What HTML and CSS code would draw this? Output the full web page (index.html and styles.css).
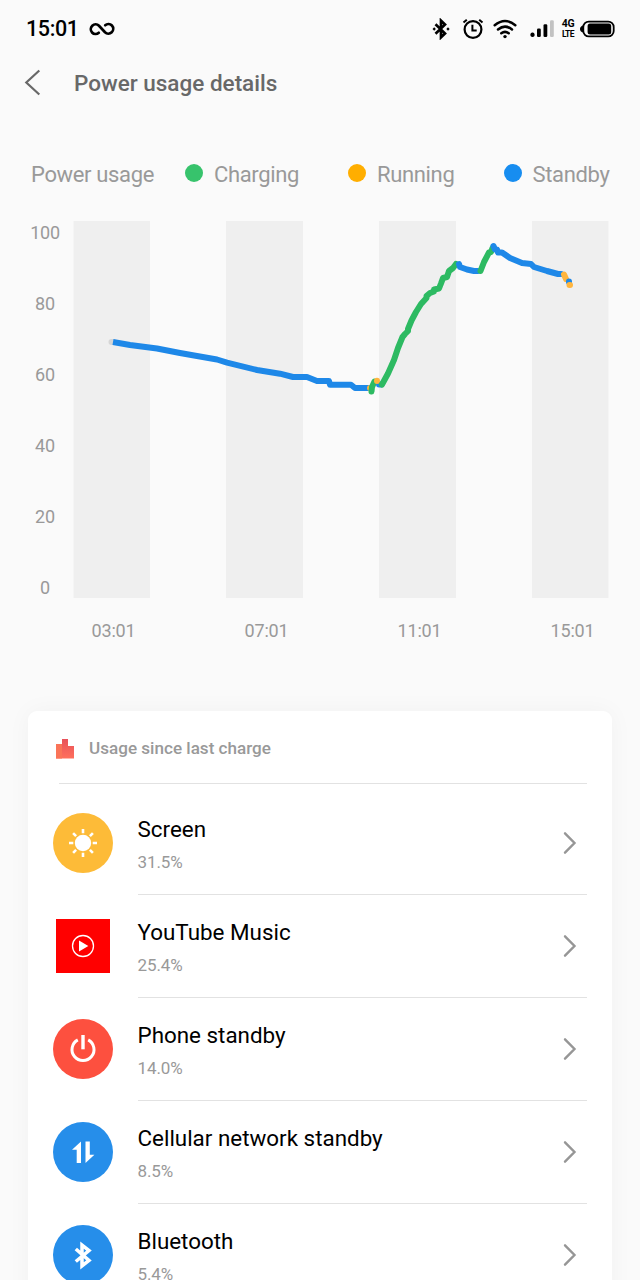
FILE: index.html
```html
<!DOCTYPE html>
<html lang="en">
<head>
  <meta charset="UTF-8" />
  <meta name="viewport" content="width=device-width, initial-scale=1.0"/>
  <title>Power usage details</title>
  <link rel="stylesheet" href="styles.css">
</head>
<body>
  <div class="status-bar">
    <span class="clock">15:01</span>
    <svg class="infinity" width="26" height="14" viewBox="0 0 26 14">
      <path d="M9.800 10.800A4.800 4.800 0 1 1 10 3.800L16 10.200A4.800 4.800 0 1 0 16.200 3.200" fill="none" stroke="#000" stroke-width="2.700" stroke-linecap="round"/>
    </svg>

    <div class="status-icons">
      <svg width="18" height="22" viewBox="0 0 18 22">
        <path d="M3.500 6.200L13 15.400L9 19.300V2.700L13 6.600L3.500 15.800" fill="none" stroke="#000" stroke-width="2.700"/>
        <path d="M0.500 11l1.700-1.700L3.900 11l-1.700 1.700zM14.300 11l1.700-1.700L17.700 11l-1.700 1.700z"/>
      </svg>
      <svg class="alarm" width="22" height="22" viewBox="0 0 22 22">
        <circle cx="11" cy="11.500" r="8.400" fill="none" stroke="#000" stroke-width="2.200"/>
        <path d="M10.400 6.800v5.700h4.300M1.500 4.600l3.300-2.800M20.500 4.600l-3.300-2.800" fill="none" stroke="#000" stroke-width="2"/>
      </svg>
      <svg class="wifi" width="24" height="20" viewBox="0 0 24 20">
        <path d="M1.700 6.200Q12-2.200 22.300 6.200M5 10.500q7-5.700 14 0M8.300 14.300q3.700-2.900 7.400 0" fill="none" stroke="#000" stroke-width="2.500" stroke-linecap="round"/>
        <circle cx="12" cy="17.600" r="1.700"/>
      </svg>
      <svg class="signal" width="24" height="18" viewBox="0 0 24 18">
        <rect x="0.500" y="12.500" width="4" height="4.500" rx="1.800"/>
        <rect x="7" y="8.500" width="3.800" height="8.500" rx="1.300"/>
        <rect x="13.500" y="4.300" width="3.800" height="12.700" rx="1.300"/>
        <rect x="20" y="0.300" width="3.800" height="16.700" rx="1.300" fill="#c2c2c2"/>
      </svg>
      <div class="network"><span class="gen">4G</span><span class="lte">LTE</span></div>
      <svg class="battery" width="35" height="18" viewBox="0 0 35 18">
        <path d="M3 5.500Q0 6.500 0 9Q0 11.500 3 12.500z"/>
        <rect x="3.300" y="1.600" width="30.400" height="14.800" rx="5.500" fill="none" stroke="#000" stroke-width="1.800"/>
        <rect x="7.600" y="3.500" width="23.600" height="11" rx="2.500"/>
      </svg>
    </div>
  </div>

  <div class="title-bar">
    <svg width="18" height="28" viewBox="0 0 18 28">
      <path d="M15.300 1.500L2.300 13.500L15.300 25.500" fill="none" stroke="#686868" stroke-width="2.200"/>
    </svg>
    <h1>Power usage details</h1>
  </div>

  <div class="legend">
    <span>Power usage</span>
    <span class="key"><i class="dot charging"></i>Charging</span>
    <span class="key"><i class="dot running"></i>Running</span>
    <span class="key"><i class="dot standby"></i>Standby</span>
  </div>

  <div class="chart">
    <div class="y-axis">
      <span>100</span><span>80</span><span>60</span><span>40</span><span>20</span><span>0</span>
    </div>
    <svg class="plot" width="536" height="377" viewBox="73 221 536 377">
      <!-- time bands -->
      <g fill="#efefef">
        <rect x="73.500" y="221" width="76.500" height="377"/>
        <rect x="226" y="221" width="77" height="377"/>
        <rect x="379" y="221" width="77" height="377"/>
        <rect x="532" y="221" width="76.500" height="377"/>
      </g>
      <g fill="none" stroke-width="6" stroke-linejoin="round" stroke-linecap="round">
        <path stroke="#d6d6d6" d="M111.500 342H113"/>
        <path stroke="#1e88e8" stroke-linecap="butt" d="M113 342L130 345L157 348.500L180 353L197 356L217 359.500L227 362.700L257 370L280 373.700L293 377H307L317 381H329L330 384.700H351L355 388H370"/>
        <path stroke="#ffb53e" d="M370 388H371"/>
        <path stroke="#2dba62" d="M371.500 391.500L372 387L374.500 381.500"/>
        <path stroke="#1e88e8" d="M379 384.500H381"/>
        <path stroke="#ffb53e" d="M377 380.700V381"/>
        <path stroke="#2dba62" d="M382 384.500L388 373.500L394 360L398 348L402.500 337L405 334L408 331V329L411.500 320.500L416 312L421 304L426.500 298V296L430 293L434 291.500V289.500L439 288.500L441 283.500L443 278L447 277L449 271L453 268L456 264"/>
        <path stroke="#1e88e8" d="M459 264L460 267L467 269.500L474 271H478"/>
        <path stroke="#2dba62" d="M480.500 271L484 262L489 252.500L491 252L492.500 248"/>
        <path stroke="#1e88e8" d="M493.500 246L495 249.500H497L498 252.500H502L510 258L522 263L531 264L534 267L547 271L558 274H561"/>
        <path stroke="#ffb53e" d="M564 274.500L566 279"/>
        <path stroke="#1e88e8" d="M569 281.500V282"/>
        <path stroke="#ffb53e" d="M569.500 285H570"/>
      </g>
    </svg>
    <div class="x-axis">
      <span>03:01</span><span>07:01</span><span>11:01</span><span>15:01</span>
    </div>
  </div>

  <div class="card">
    <div class="card-head">
      <svg width="18" height="20" viewBox="0 0 18 20">
        <defs>
          <linearGradient id="bars" x1="0" y1="0" x2="0" y2="1">
            <stop offset="0" stop-color="#e8515a"/>
            <stop offset="1" stop-color="#ff705c"/>
          </linearGradient>
        </defs>
        <path d="M0 5h6V0h6v7h6v12.500H0z" fill="url(#bars)"/>
        <path d="M0 5h6v14.500H0z" fill="#fa7458"/>
      </svg>
      <span>Usage since last charge</span>
    </div>

    <div class="row">
      <svg class="icon" viewBox="0 0 60 60">
        <circle cx="30" cy="30" r="30" fill="#fdbb38"/>
        <circle cx="30" cy="30" r="8.200" fill="#fff"/>
        <path d="M30 16v4.300M30 39.700V44M16 30h4.300M39.700 30H44M20.100 20.100l3 3M36.900 36.900l3 3M20.100 39.900l3-3M36.900 23.100l3-3" stroke="#fff" stroke-width="2.600"/>
      </svg>
      <div class="info">
        <div><div class="name">Screen</div><div class="percent">31.5%</div></div>
        <svg class="arrow" viewBox="0 0 14 24"><path d="M2 2.300L11.500 12L2 21.700"/></svg>
      </div>
    </div>

    <div class="row">
      <svg class="icon" viewBox="0 0 60 60">
        <rect x="3" y="3" width="54" height="54" fill="#f00"/>
        <circle cx="30" cy="30" r="10.500" fill="none" stroke="#fff" stroke-width="1.300"/>
        <path d="M26 24.600v10.800l9.300-5.400z" fill="#fff"/>
      </svg>
      <div class="info">
        <div><div class="name">YouTube Music</div><div class="percent">25.4%</div></div>
        <svg class="arrow" viewBox="0 0 14 24"><path d="M2 2.300L11.500 12L2 21.700"/></svg>
      </div>
    </div>

    <div class="row">
      <svg class="icon" viewBox="0 0 60 60">
        <circle cx="30" cy="30" r="30" fill="#fd503f"/>
        <path d="M24.800 20.900A11 11 0 1 0 35.200 20.900" fill="none" stroke="#fff" stroke-width="3"/>
        <path d="M30 16v14.300" stroke="#fff" stroke-width="3.400"/>
      </svg>
      <div class="info">
        <div><div class="name">Phone standby</div><div class="percent">14.0%</div></div>
        <svg class="arrow" viewBox="0 0 14 24"><path d="M2 2.300L11.500 12L2 21.700"/></svg>
      </div>
    </div>

    <div class="row">
      <svg class="icon" viewBox="0 0 60 60">
        <circle cx="30" cy="30" r="30" fill="#268eea"/>
        <path d="M28 19.500V41h-4.300V27.800H19zM32.500 19.500h4.300v13.200h4.600L32.500 41z" fill="#fff"/>
      </svg>
      <div class="info">
        <div><div class="name">Cellular network standby</div><div class="percent">8.5%</div></div>
        <svg class="arrow" viewBox="0 0 14 24"><path d="M2 2.300L11.500 12L2 21.700"/></svg>
      </div>
    </div>

    <div class="row">
      <svg class="icon" viewBox="0 0 60 60">
        <circle cx="30" cy="30" r="30" fill="#268eea"/>
        <path d="M22.800 24L36 35.500L29 41V20L36 25.500L22.800 36.500" fill="none" stroke="#fff" stroke-width="3.500"/>
      </svg>
      <div class="info">
        <div><div class="name">Bluetooth</div><div class="percent">5.4%</div></div>
        <svg class="arrow" viewBox="0 0 14 24"><path d="M2 2.300L11.500 12L2 21.700"/></svg>
      </div>
    </div>
  </div>
</body>
</html>
```

FILE: styles.css
```css
* {
  box-sizing: border-box;
  margin: 0;
  padding: 0;
}

body {
  font-family: Roboto, "Liberation Sans", sans-serif;
  background: #fafafa;
  color: #000;
  height: 1280px;
  overflow: hidden;
}

svg {
  display: block;
  flex-shrink: 0;
}

/* Status bar */
.status-bar {
  display: flex;
  align-items: center;
  height: 57px;
  padding: 0 25px 0 26px;
}

.clock {
  width: 53px;
  font-size: 21.5px;
  font-weight: 500;
  letter-spacing: -0.4px;
}

.infinity {
  margin: 1px 0 0 10px;
}

.status-icons {
  display: flex;
  align-items: center;
  margin-left: auto;
}

.alarm {
  margin-left: 12px;
}

.wifi {
  margin-left: 9px;
}

.signal {
  margin-left: 13px;
}

.network {
  display: flex;
  flex-direction: column;
  align-items: center;
  width: 14px;
  margin: 1px 5px 0 7px;
  font-weight: 700;
  line-height: 10px;
}

.gen {
  font-size: 10.5px;
  letter-spacing: -0.4px;
}

.lte {
  font-size: 8.5px;
  letter-spacing: -0.5px;
}

/* Title */
.title-bar {
  display: flex;
  align-items: center;
  gap: 32px;
  height: 52px;
  padding-left: 24px;
}

.title-bar h1 {
  font-size: 22.5px;
  font-weight: 500;
  color: #686868;
}

/* Chart */
.legend {
  display: grid;
  grid-template-columns: 154px 163px 155.5px auto;
  align-items: center;
  height: 40px;
  margin-top: 45px;
  padding-left: 31px;
  font-size: 22px;
  letter-spacing: -0.35px;
  color: #999;
  white-space: nowrap;
}

.key {
  display: flex;
  align-items: center;
}

.dot {
  width: 18px;
  height: 18px;
  margin: 0 11px 3px 0;
  border-radius: 50%;
}

.charging {
  background: #37c36c;
}

.running {
  background: #ffae00;
}

.standby {
  background: #178df0;
}

.chart {
  display: grid;
  grid-template-columns: 56px 536px;
  margin: 27px 0 0 17px;
  font-size: 18px;
  letter-spacing: -0.2px;
  color: #999;
}

.y-axis {
  display: flex;
  flex-direction: column;
  justify-content: space-between;
  align-items: center;
  height: 378px;
  margin-bottom: -1px;
  padding-top: 1px;
  line-height: 22px;
}

.x-axis {
  grid-column: 2;
  display: grid;
  grid-template-columns: repeat(4, 153px);
  margin-top: 22px;
  line-height: 22px;
}

.x-axis span {
  width: 81px;
  text-align: center;
}

/* Usage card */
.card {
  height: 620px;
  margin: 69px 28.5px 0 28px;
  padding: 0 24.5px 0 25px;
  background: #fff;
  border-radius: 9px;
  box-shadow: 0 0 24px rgba(0, 0, 0, 0.04);
}

.card-head {
  display: flex;
  align-items: center;
  gap: 15px;
  height: 73px;
  margin: 0 0 8px 6px;
  padding-top: 2px;
  border-bottom: 1px solid #e2e2e2;
  font-size: 17.1px;
  font-weight: 500;
  color: #999;
}

.card-head svg {
  margin: 1px 0 0 -3px;
}

.row {
  display: flex;
  align-items: center;
  gap: 24.5px;
  height: 103px;
}

.icon {
  width: 60px;
  height: 60px;
  margin-bottom: 2px;
}

.info {
  display: flex;
  align-items: center;
  justify-content: space-between;
  flex: 1;
  height: 103px;
  padding-right: 10.5px;
  border-bottom: 1px solid #e2e2e2;
}

.name {
  padding-top: 3px;
  font-size: 22.4px;
  line-height: 34px;
}

.percent {
  font-size: 17px;
  line-height: 32px;
  letter-spacing: -0.1px;
  color: #999;
}

.arrow {
  width: 14px;
  height: 24px;
  fill: none;
  stroke: #969696;
  stroke-width: 2.4;
  stroke-linecap: round;
}
```
